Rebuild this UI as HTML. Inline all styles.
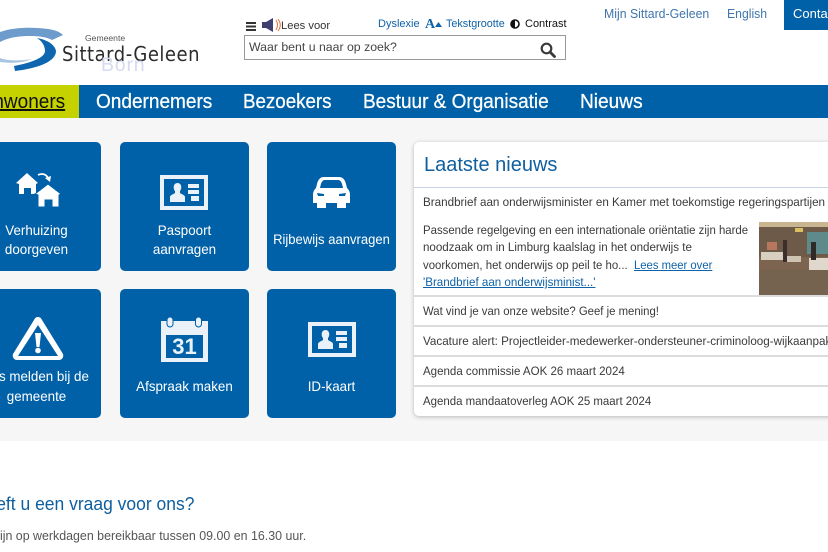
<!DOCTYPE html>
<html lang="nl"><head><meta charset="utf-8"><title>Gemeente Sittard-Geleen</title>
<style>
html,body{margin:0;padding:0;background:#fff}
#p{position:relative;width:828px;height:552px;overflow:hidden;background:#fff;font-family:"Liberation Sans",sans-serif;color:#333}
.t{position:absolute;white-space:nowrap;line-height:1}
.b{position:absolute;background:#0061a8;border-radius:5px;width:129px;height:129px}
.b svg{position:absolute}
.l{position:absolute;white-space:nowrap;color:#fff;font-size:14px;line-height:1;text-align:center;left:0;width:129px;transform:scaleX(.955)}
.n{color:#fff;font-size:20px;top:92px;-webkit-text-stroke:.25px #fff;transform-origin:0 0}
.row{position:absolute;left:414px;width:420px;height:1.5px;background:#dcdcdc}
.nw{font-size:12.4px;color:#3a3a3a;left:423px;transform-origin:0 0}
</style></head><body><div id="p">
<svg style="position:absolute;left:0;top:24px" width="70" height="50" viewBox="0 0 70 50">
<path d="M0 8C14 3 34 3 48 5C55 6 60 8 63 11L52 16C45 12 30 11 16 13C9 14 4 16 0 18Z" fill="#6d9bcb"/>
<path d="M37 14C48 16 55 21 56 27C56 37 40 44 15 47L14 42C30 39 45 34 45 27C45 22 42 17 37 14Z" fill="#0f66b0"/>
<path d="M0 34C8 37 20 37 32 35C20 40 8 39 0 38Z" fill="#a9c4e0"/>
</svg>
<div class="t" style="left:85px;top:34px;font-size:8.6px;color:#555">Gemeente</div>
<div class="t" style="left:62px;top:44px;font-size:20.5px;color:#2b2b2b;letter-spacing:.6px;font-family:'DejaVu Sans',sans-serif;transform-origin:0 0;transform:scaleX(.877)">Sittard-Geleen</div>
<div class="t" style="left:101px;top:56px;font-size:19.5px;color:#d5daf0;letter-spacing:.8px">Born</div>

<svg style="position:absolute;left:246px;top:22px" width="10" height="9"><path d="M0 0h10v2H0zM0 3.500h10v2H0zM0 7h10v2H0z" fill="#333"/></svg>
<svg style="position:absolute;left:262px;top:18px" width="20" height="14"><path d="M0 4h4l7-4v14l-7-4H0z" fill="#3f3f70"/><path d="M14 2c2 3 2 7 0 10M16 1c3 4 3 8 0 12" fill="none" stroke="#e07040" stroke-width="1"/></svg>
<div class="t" style="left:281px;top:21px;font-size:11.200px;color:#333">Lees voor</div>
<div class="t" style="left:378px;top:19px;font-size:11px;color:#0f62a8">Dyslexie</div>
<div class="t" style="left:425px;top:18px;font-size:14px;font-weight:bold;font-family:'Liberation Serif',serif;color:#0f62a8">A</div>
<svg style="position:absolute;left:435px;top:22px" width="7" height="5"><path d="M0 5L3.500 0L7 5Z" fill="#0f62a8"/></svg>
<div class="t" style="left:446px;top:19px;font-size:10.800px;color:#0f62a8">Tekstgrootte</div>
<svg style="position:absolute;left:510px;top:19px" width="10" height="10"><circle cx="5" cy="5" r="4" fill="#fff" stroke="#111" stroke-width="1.600"/><path d="M5 1a4 4 0 0 0 0 8z" fill="#111"/></svg>
<div class="t" style="left:525px;top:19px;font-size:11px;color:#111">Contrast</div>
<div style="position:absolute;left:244px;top:35px;width:320px;height:23px;border:1px solid #999;background:#fff"></div>
<div class="t" style="left:249px;top:41px;font-size:12.300px;color:#444">Waar bent u naar op zoek?</div>
<svg style="position:absolute;left:540px;top:42px" width="16" height="16"><circle cx="6.500" cy="6.500" r="4.800" fill="none" stroke="#3a3a3a" stroke-width="2.200"/><path d="M10 10l4.500 4.500" stroke="#3a3a3a" stroke-width="2.800" stroke-linecap="round"/></svg>

<div class="t" style="left:604px;top:7px;font-size:13px;color:#3f76ad;transform-origin:0 0;transform:scaleX(.946)">Mijn Sittard-Geleen</div>
<div class="t" style="left:727px;top:7px;font-size:13px;color:#3f76ad;transform-origin:0 0;transform:scaleX(.94)">English</div>
<div style="position:absolute;left:784px;top:0;width:44px;height:30px;background:#0061a8"></div>
<div class="t" style="left:793px;top:7px;font-size:13px;color:#fff">Contact</div>

<div style="position:absolute;left:0;top:85px;width:828px;height:33.500px;background:#0061a8"></div>
<div style="position:absolute;left:0;top:85px;width:79px;height:33.500px;background:#c5d200"></div>
<div style="position:absolute;left:0;top:85px;width:79px;height:33px;overflow:hidden"><div class="t" style="right:14px;top:7px;font-size:20px;color:#111;text-decoration:underline;transform-origin:100% 0;transform:scaleX(.95)">Inwoners</div></div>
<div class="t n" style="left:96px;transform:scaleX(.951)">Ondernemers</div>
<div class="t n" style="left:243px;transform:scaleX(.937)">Bezoekers</div>
<div class="t n" style="left:363px;transform:scaleX(.949)">Bestuur &amp; Organisatie</div>
<div class="t n" style="left:580px;transform:scaleX(.955)">Nieuws</div>

<div style="position:absolute;left:0;top:118px;width:828px;height:323px;background:#f6f6f6"></div>

<div class="b" style="left:-28px;top:142px">
<svg style="left:43px;top:29px" width="46" height="37" viewBox="0 0 46 37" fill="#fff"><path d="M1 12L12 2L23 12L21 13V23H16V17H9V23H4V13Z"/><path d="M20 23L33 13L46 23L44 24V36H37V29H30V36H23V24Z" stroke="#0061a8" stroke-width="1"/><path d="M23 4C27 2 31 3 33 7" fill="none" stroke="#fff" stroke-width="1.800"/><path d="M30 7L36 5L35 11Z"/></svg>
<div class="l" style="top:81px">Verhuizing</div><div class="l" style="top:100px">doorgeven</div></div>

<div class="b" style="left:120px;top:142px">
<svg style="left:40px;top:33px" width="48" height="35" viewBox="0 0 48 35"><path d="M0 0H48V35H0ZM4 4V31H44V4Z" fill="#eaf1f8" fill-rule="evenodd"/><path d="M10 27V22C10 20 14 19 15 18V16C13 14 13 8 17.500 8C22 8 22 14 20 16V18C21 19 25 20 25 22V27Z" fill="#eaf1f8"/><path d="M28 9H39V13H28ZM28 15H39V19H28ZM31 21H39V26H31Z" fill="#eaf1f8"/></svg>
<div class="l" style="top:81px">Paspoort</div><div class="l" style="top:100px">aanvragen</div></div>

<div class="b" style="left:267px;top:142px">
<svg style="left:46px;top:35px" width="37" height="32" viewBox="0 0 37 32"><path fill="#fff" fill-rule="evenodd" d="M11 0H26C30 0 32 3 33 7L34 11C36 13 37 15 37 18V26H33V31H24V26H13V31H4V26H0V18C0 15 1 13 3 11L4 7C5 3 7 0 11 0ZM12 3C9 3 8 6 7 11H30C29 6 28 3 25 3ZM4 16L5 19H11V17ZM33 16L26 17V19H32Z"/></svg>
<div class="l" style="top:91px;font-size:13.500px;transform:scaleX(.967)">Rijbewijs aanvragen</div></div>

<div class="b" style="left:-28px;top:289px">
<svg style="left:40px;top:28px" width="52" height="44" viewBox="0 0 52 44"><path fill="#fff" fill-rule="evenodd" d="M26 0C28 0 29 1 30 3L51 37C52 40 50 43 47 43H5C2 43 0 40 1 37L22 3C23 1 24 0 26 0ZM26 8L6 39H46Z"/><path fill="#fff" d="M23 16H29L27.500 30H24.500Z"/><circle cx="26" cy="33.500" r="2.800" fill="#fff"/></svg>
<div class="l" style="top:80px">Iets melden bij de</div><div class="l" style="top:100px">gemeente</div></div>

<div class="b" style="left:120px;top:289px">
<svg style="left:41px;top:28px" width="47" height="45" viewBox="0 0 47 45"><path fill="#eaf1f8" fill-rule="evenodd" d="M0 4H47V45H0ZM5 18V41H42V18Z"/><rect x="6" y="0" width="6" height="10" rx="3" fill="#eaf1f8" stroke="#0061a8"/><rect x="34.500" y="0" width="6" height="10" rx="3" fill="#eaf1f8" stroke="#0061a8"/><text x="23.500" y="37" text-anchor="middle" font-family="Liberation Sans,sans-serif" font-weight="bold" font-size="22" fill="#eaf1f8">31</text></svg>
<div class="l" style="top:90px">Afspraak maken</div></div>

<div class="b" style="left:267px;top:289px">
<svg style="left:41px;top:33px" width="48" height="35" viewBox="0 0 48 35"><path d="M0 0H48V35H0ZM4 4V31H44V4Z" fill="#eaf1f8" fill-rule="evenodd"/><path d="M10 27V22C10 20 14 19 15 18V16C13 14 13 8 17.500 8C22 8 22 14 20 16V18C21 19 25 20 25 22V27Z" fill="#eaf1f8"/><path d="M28 9H39V13H28ZM28 15H39V19H28ZM31 21H39V26H31Z" fill="#eaf1f8"/></svg>
<div class="l" style="top:90px">ID-kaart</div></div>

<div style="position:absolute;left:414px;top:142px;width:430px;height:274px;background:#fff;border-radius:5px;box-shadow:0 1px 4px rgba(0,0,0,.25)"></div>
<div class="t" style="left:424px;top:155px;font-size:20px;color:#0f5f9f">Laatste nieuws</div>
<div class="row" style="top:187px;height:1px;background:#c4d3e8"></div>
<div class="t nw" style="top:196px;transform:scaleX(.94)">Brandbrief aan onderwijsminister en Kamer met toekomstige regeringspartijen</div>
<div class="t nw" style="top:224px;transform:scaleX(.92)">Passende regelgeving en een internationale oriëntatie zijn harde</div>
<div class="t nw" style="top:241px;transform:scaleX(.934)">noodzaak om in Limburg kaalslag in het onderwijs te</div>
<div class="t nw" style="top:259px;transform:scaleX(.92)">voorkomen, het onderwijs op peil te ho...</div>
<div class="t nw" style="left:634px;top:259px;color:#0f62a8;text-decoration:underline;transform:scaleX(.91)">Lees meer over</div>
<div class="t nw" style="top:276px;color:#0f62a8;text-decoration:underline;transform:scaleX(.935)">'Brandbrief aan onderwijsminist...'</div>
<svg style="position:absolute;left:759px;top:222px" width="69" height="74" viewBox="0 0 69 74"><rect width="69" height="74" fill="#7c6450"/><rect width="69" height="5" fill="#c9b58f"/><rect y="5" width="69" height="30" fill="#6d5a48"/><rect x="48" y="10" width="21" height="22" fill="#5f8a8c"/><rect y="48" width="69" height="26" fill="#75634f"/><rect x="2" y="30" width="22" height="8" fill="#d8cfc0"/><rect x="26" y="34" width="16" height="6" fill="#cfc4b2"/><rect x="50" y="36" width="19" height="12" fill="#e0d8cc"/><rect x="24" y="18" width="4" height="22" fill="#3a2f2a"/><rect x="52" y="20" width="5" height="18" fill="#2f2a28"/><rect x="8" y="20" width="10" height="8" fill="#b8775c"/><rect x="36" y="6" width="8" height="4" fill="#d8c060"/></svg>
<div class="row" style="top:295px"></div>
<div class="t nw" style="top:305px;transform:scaleX(.915)">Wat vind je van onze website? Geef je mening!</div>
<div class="row" style="top:325px"></div>
<div class="t nw" style="top:335px;transform:scaleX(.94)">Vacature alert: Projectleider-medewerker-ondersteuner-criminoloog-wijkaanpak</div>
<div class="row" style="top:355px"></div>
<div class="t nw" style="top:365px;transform:scaleX(.93)">Agenda commissie AOK 26 maart 2024</div>
<div class="row" style="top:385px"></div>
<div class="t nw" style="top:395px;transform:scaleX(.923)">Agenda mandaatoverleg AOK 25 maart 2024</div>

<div class="t" style="right:634px;top:495px;font-size:18.500px;color:#0f5f9f;transform-origin:100% 0;transform:scaleX(.945)">Heeft u een vraag voor ons?</div>
<div class="t" style="right:522px;top:530px;font-size:12.600px;color:#555;transform-origin:100% 0;transform:scaleX(.985)">Wij zijn op werkdagen bereikbaar tussen 09.00 en 16.30 uur.</div>
</div></body></html>
